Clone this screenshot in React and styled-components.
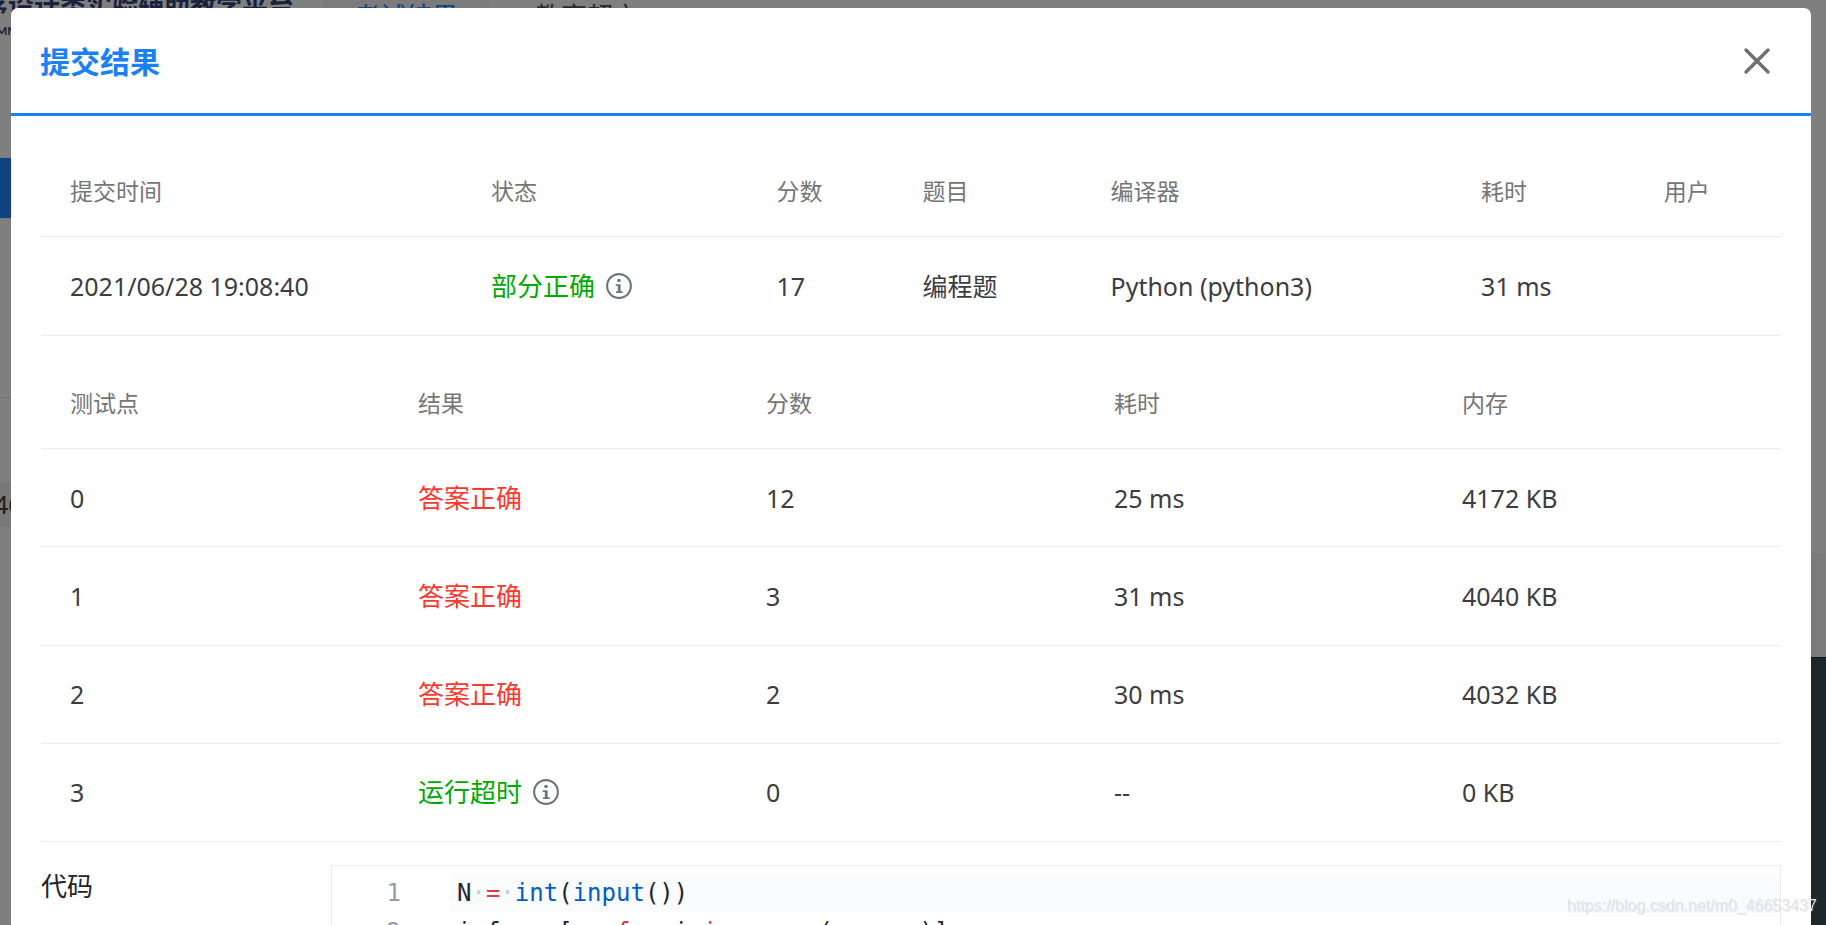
import React from "react";
import styled, { createGlobalStyle } from "styled-components";

const GlobalStyle = createGlobalStyle`
  *, *::before, *::after { box-sizing: border-box; }
  body {
    margin: 0;
    overflow: hidden;
    background: #fff;
    color: #3d3d3d;
    font-family: "Noto Sans", "Noto Sans CJK SC", sans-serif;
    font-size: 25px;
    line-height: 36px;
  }
`;

/* ---------- page behind the dialog ---------- */

const Page = styled.div`
  display: flex;
  flex-direction: column;
  height: 100vh;
  overflow: hidden;
`;

const TopBar = styled.header`
  display: flex;
  flex: none;
  height: 42px;
  overflow: hidden;
`;

const Brand = styled.div`
  flex: none;
  width: 341px;
  margin: -12px 0 0 -18px;
  color: #34427a;
  font-size: 26px;
  font-weight: 700;
  line-height: 36px;
  white-space: nowrap;
`;

const BrandCaption = styled.small`
  display: block;
  padding-left: 14px;
  font-family: Lato, sans-serif;
  font-size: 12px;
  line-height: 14px;
`;

const Tab = styled.a`
  flex: none;
  height: 42px;
  margin-right: 15px;
  padding: 0 31px;
  background: ${(p) => (p.$active ? "#f6f6f6" : "transparent")};
  color: ${(p) => (p.$active ? "#1e86ff" : "#555")};
  font-size: 26px;
  line-height: 32px;
  text-decoration: none;
  white-space: nowrap;
`;

const Columns = styled.div`
  display: flex;
  flex: 1;
  justify-content: space-between;
  padding-top: 116px;
`;

const SideNav = styled.nav`
  width: 240px;
`;

const SideActive = styled.div`
  height: 60px;
  background: #1e86ff;
`;

const SideGroup = styled.div`
  height: 180px;
  border-bottom: 1px solid #e4e4e4;
`;

const SideRow = styled.div`
  height: 45px;
  margin-top: 84px;
  background: #f1f1f1;
  line-height: 45px;
  text-indent: -6px;
`;

const Preview = styled.div`
  width: 240px;
  margin-top: 395px;
  padding-top: 104px;
  background: #f7f7f7;
`;

const PreviewCode = styled.div`
  height: 100%;
  background: #385054;
  border-top: 1px solid #222;
`;

/* ---------- dialog ---------- */

const Overlay = styled.div`
  position: fixed;
  inset: 0;
  padding: 8px 15px 0 11px;
  overflow: hidden;
  background: rgba(0, 0, 0, 0.5);
`;

const Dialog = styled.section`
  background: #fff;
  border-radius: 7px;
`;

const DialogHeader = styled.header`
  display: flex;
  align-items: center;
  justify-content: space-between;
  height: 108px;
  padding: 2px 38px 0 29px;
  border-bottom: 3px solid #1a80f3;
`;

const Title = styled.h1`
  margin: 0;
  color: #1a80f3;
  font-size: 30px;
  font-weight: 700;
  line-height: 44px;
`;

const CloseButton = styled.button`
  display: flex;
  padding: 0;
  border: 0;
  background: none;
  color: #707070;
  cursor: pointer;
`;

const DialogBody = styled.div`
  padding: 8px 30px 30px;
`;

const Table = styled.table`
  width: 100%;
  height: ${(p) => p.$height};
  table-layout: fixed;
  border-collapse: separate;
  border-spacing: 0;
`;

const HeadCell = styled.th`
  width: ${(p) => p.$width};
  height: 113px;
  padding: 22px 0 0 29px;
  border-bottom: 1px solid #ececec;
  color: #767676;
  font-size: 23px;
  font-weight: 400;
  text-align: left;
`;

const Cell = styled.td`
  height: 98px;
  padding: 0 0 0 29px;
  border-bottom: 1px solid #ececec;
  white-space: nowrap;
`;

const statusColors = { green: "#00aa00", red: "#fb3a2f" };

const Status = styled.span`
  display: flex;
  align-items: center;
  gap: 11px;
  color: ${(p) => statusColors[p.$tone]};
  font-size: 26px;
`;

const InfoButton = styled.button`
  display: flex;
  padding: 0;
  border: 0;
  background: none;
  color: #6c757d;
  cursor: pointer;
`;

const CodeSection = styled.section`
  display: grid;
  grid-template-columns: 290px 1fr;
  padding-top: 23px;
`;

const CodeLabel = styled.h2`
  margin: 3px 0 0;
  color: #212529;
  font-size: 26px;
  font-weight: 400;
  line-height: 36px;
`;

const CodeBox = styled.div`
  padding: 8px 0;
  border: 1px solid #ececec;
  font-family: "DejaVu Sans Mono", monospace;
  font-size: 24px;
  line-height: 39px;
`;

const CodeLine = styled.div`
  display: grid;
  grid-template-columns: 69px 1fr;
  column-gap: 49px;
`;

const LineNumber = styled.span`
  color: #959da5;
  text-align: right;
`;

const LineCode = styled.code`
  padding-left: 7px;
  background: ${(p) => (p.$active ? "#fafbfd" : "transparent")};
  color: #24292e;
  font-family: inherit;
  white-space: pre;
`;

const tokenColors = { keyword: "#d73a49", builtin: "#005cc5", space: "#c9cbcd" };

const Token = styled.span`
  color: ${(p) => tokenColors[p.$kind] || "inherit"};
`;

const Watermark = styled.span`
  position: fixed;
  right: 9px;
  bottom: 8px;
  color: #e3e4e6;
  font-family: "Liberation Sans", sans-serif;
  font-size: 16px;
  line-height: 22px;
  text-shadow: 1px 1px 1px rgba(150, 150, 150, 0.2);
`;

const summaryColumns = [
  ["提交时间", "24.2%"],
  ["状态", "16.4%"],
  ["分数", "8.4%"],
  ["题目", "10.8%"],
  ["编译器", "21.3%"],
  ["耗时", "10.5%"],
  ["用户", "8.4%"],
];

const caseColumns = ["测试点", "结果", "分数", "耗时", "内存"];

const cases = [
  { id: 0, result: "答案正确", tone: "red", score: 12, time: "25 ms", memory: "4172 KB" },
  { id: 1, result: "答案正确", tone: "red", score: 3, time: "31 ms", memory: "4040 KB" },
  { id: 2, result: "答案正确", tone: "red", score: 2, time: "30 ms", memory: "4032 KB" },
  { id: 3, result: "运行超时", tone: "green", info: true, score: 0, time: "--", memory: "0 KB" },
];

const codeLines = [
  [["N"], ["·", "space"], ["=", "keyword"], ["·", "space"], ["int", "builtin"], ["("], ["input", "builtin"], ["())"]],
  [
    ["info"], ["·", "space"], ["=", "keyword"], ["·", "space"], ["[no"],
    ["·", "space"], ["for", "keyword"], ["·", "space"], ["i"], ["·", "space"], ["in", "keyword"],
    ["·", "space"], ["range", "builtin"], ["(source)]"],
  ],
];

function InfoIcon() {
  return (
    <svg width="26" height="26" viewBox="0 0 16 16" fill="currentColor">
      <circle cx="8" cy="8" r="7.3" fill="none" stroke="currentColor" strokeWidth="1.3" />
      <circle cx="8" cy="4.6" r="1.1" />
      <path d="M6 6.9h3v4.4h1.3v1H6.2v-1h1.1V8H6z" />
    </svg>
  );
}

function StatusText({ tone, info, children }) {
  return (
    <Status $tone={tone}>
      {children}
      {info && (
        <InfoButton type="button" aria-label="详情">
          <InfoIcon />
        </InfoButton>
      )}
    </Status>
  );
}

export default function App() {
  return (
    <>
      <GlobalStyle />
      <Page>
        <TopBar>
          <Brand>
            序设计类实验辅助教学平台
            <BrandCaption>MMING</BrandCaption>
          </Brand>
          <Tab href="#results" $active>考试结果</Tab>
          <Tab href="#store">教育超市</Tab>
        </TopBar>
        <Columns>
          <SideNav>
            <SideActive />
            <SideGroup />
            <SideRow>46</SideRow>
          </SideNav>
          <Preview>
            <PreviewCode />
          </Preview>
        </Columns>
      </Page>
      <Overlay>
        <Dialog role="dialog" aria-labelledby="dialog-title">
          <DialogHeader>
            <Title id="dialog-title">提交结果</Title>
            <CloseButton type="button" aria-label="关闭">
              <svg width="32" height="32" viewBox="0 0 32 32" fill="none" stroke="currentColor" strokeWidth="3.4" strokeLinecap="round">
                <path d="M5 4 27 26M27 4 5 26" />
              </svg>
            </CloseButton>
          </DialogHeader>
          <DialogBody>
            <Table $height="212px">
              <thead>
                <tr>
                  {summaryColumns.map(([name, width]) => (
                    <HeadCell key={name} $width={width}>{name}</HeadCell>
                  ))}
                </tr>
              </thead>
              <tbody>
                <tr>
                  <Cell>2021/06/28 19:08:40</Cell>
                  <Cell><StatusText tone="green" info>部分正确</StatusText></Cell>
                  <Cell>17</Cell>
                  <Cell>编程题</Cell>
                  <Cell>Python (python3)</Cell>
                  <Cell>31 ms</Cell>
                  <Cell />
                </tr>
              </tbody>
            </Table>
            <Table $height="506px">
              <thead>
                <tr>
                  {caseColumns.map((name) => (
                    <HeadCell key={name} $width="20%">{name}</HeadCell>
                  ))}
                </tr>
              </thead>
              <tbody>
                {cases.map((c) => (
                  <tr key={c.id}>
                    <Cell>{c.id}</Cell>
                    <Cell><StatusText tone={c.tone} info={c.info}>{c.result}</StatusText></Cell>
                    <Cell>{c.score}</Cell>
                    <Cell>{c.time}</Cell>
                    <Cell>{c.memory}</Cell>
                  </tr>
                ))}
              </tbody>
            </Table>
            <CodeSection>
              <CodeLabel>代码</CodeLabel>
              <CodeBox>
                {codeLines.map((tokens, i) => (
                  <CodeLine key={i}>
                    <LineNumber>{i + 1}</LineNumber>
                    <LineCode $active={i === 0}>
                      {tokens.map(([text, kind], j) => (
                        <Token key={j} $kind={kind}>{text}</Token>
                      ))}
                    </LineCode>
                  </CodeLine>
                ))}
              </CodeBox>
            </CodeSection>
          </DialogBody>
        </Dialog>
      </Overlay>
      <Watermark>https://blog.csdn.net/m0_46653437</Watermark>
    </>
  );
}
